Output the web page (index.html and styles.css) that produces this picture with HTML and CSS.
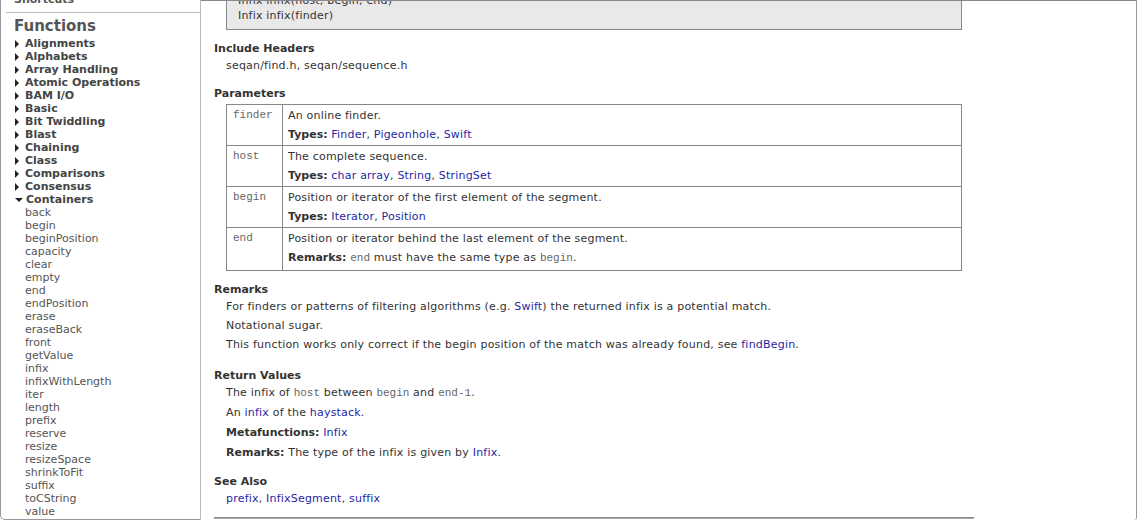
FILE: index.html
```html
<!DOCTYPE html>
<html>
<head>
<meta charset="utf-8">
<title>infix</title>
<link rel="stylesheet" href="styles.css">
</head>
<body>
<div class="window">
  <nav class="sidebar">
    <div class="shortcuts">Shortcuts</div>
    <h1 class="nav-title">Functions</h1>
    <ul class="cats">
      <li class="cat"><span class="tri"></span>Alignments</li>
      <li class="cat"><span class="tri"></span>Alphabets</li>
      <li class="cat"><span class="tri"></span>Array Handling</li>
      <li class="cat"><span class="tri"></span>Atomic Operations</li>
      <li class="cat"><span class="tri"></span>BAM I/O</li>
      <li class="cat"><span class="tri"></span>Basic</li>
      <li class="cat"><span class="tri"></span>Bit Twiddling</li>
      <li class="cat"><span class="tri"></span>Blast</li>
      <li class="cat"><span class="tri"></span>Chaining</li>
      <li class="cat"><span class="tri"></span>Class</li>
      <li class="cat"><span class="tri"></span>Comparisons</li>
      <li class="cat"><span class="tri"></span>Consensus</li>
      <li class="cat"><span class="tri open"></span>Containers
        <ul class="items">
          <li>back</li>
          <li>begin</li>
          <li>beginPosition</li>
          <li>capacity</li>
          <li>clear</li>
          <li>empty</li>
          <li>end</li>
          <li>endPosition</li>
          <li>erase</li>
          <li>eraseBack</li>
          <li>front</li>
          <li>getValue</li>
          <li>infix</li>
          <li>infixWithLength</li>
          <li>iter</li>
          <li>length</li>
          <li>prefix</li>
          <li>reserve</li>
          <li>resize</li>
          <li>resizeSpace</li>
          <li>shrinkToFit</li>
          <li>suffix</li>
          <li>toCString</li>
          <li>value</li>
        </ul>
      </li>
    </ul>
  </nav>
  <main class="main">
    <div class="content">
      <div class="signature">
        <div>Infix infix(host, begin, end)</div>
        <div>Infix infix(finder)</div>
      </div>

      <section class="sec sec-plain">
        <h2 class="sec-title">Include Headers</h2>
        <div class="sec-text">seqan/find.h, seqan/sequence.h</div>
      </section>

      <section class="sec">
        <h2 class="sec-title">Parameters</h2>
        <table class="params">
          <colgroup><col class="col-name"><col></colgroup>
          <tr>
            <td class="pname">finder</td>
            <td class="pdesc"><p>An online finder.</p><p><b>Types:</b> <a href="#">Finder</a>, <a href="#">Pigeonhole</a>, <a href="#">Swift</a></p></td>
          </tr>
          <tr>
            <td class="pname">host</td>
            <td class="pdesc"><p>The complete sequence.</p><p><b>Types:</b> <a href="#">char array</a>, <a href="#">String</a>, <a href="#">StringSet</a></p></td>
          </tr>
          <tr>
            <td class="pname">begin</td>
            <td class="pdesc"><p>Position or iterator of the first element of the segment.</p><p><b>Types:</b> <a href="#">Iterator</a>, <a href="#">Position</a></p></td>
          </tr>
          <tr class="row-last">
            <td class="pname">end</td>
            <td class="pdesc"><p>Position or iterator behind the last element of the segment.</p><p><b>Remarks:</b> <code>end</code> must have the same type as <code>begin</code>.</p></td>
          </tr>
        </table>
      </section>

      <section class="sec">
        <h2 class="sec-title">Remarks</h2>
        <p class="text">For finders or patterns of filtering algorithms (e.g. <a href="#">Swift</a>) the returned infix is a potential match.</p>
        <p class="text">Notational sugar.</p>
        <p class="text">This function works only correct if the begin position of the match was already found, see <a href="#">findBegin</a>.</p>
      </section>

      <section class="sec sec-return">
        <h2 class="sec-title">Return Values</h2>
        <p class="text">The infix of <code>host</code> between <code>begin</code> and <code>end-1</code>.</p>
        <p class="text">An <a href="#">infix</a> of the <a href="#">haystack</a>.</p>
        <p class="text"><b>Metafunctions:</b> <a href="#">Infix</a></p>
        <p class="text"><b>Remarks:</b> The type of the infix is given by <a href="#">Infix</a>.</p>
      </section>

      <section class="sec sec-last">
        <h2 class="sec-title">See Also</h2>
        <div class="sec-text"><a href="#">prefix</a>, <a href="#">InfixSegment</a>, <a href="#">suffix</a></div>
      </section>

      <div class="footer-rule"></div>
    </div>
  </main>
</div>
</body>
</html>
```
FILE: styles.css
```css
* { box-sizing: border-box; }

html, body {
  margin: 0;
  padding: 0;
  background: #fff;
}

body {
  font-family: "DejaVu Sans", Verdana, sans-serif;
  font-size: 11px;
  color: #333;
}

.window {
  display: flex;
  width: 1137px;
  height: 520px;
  overflow: hidden;
}

/* ---------- sidebar ---------- */
.sidebar {
  width: 201px;
  flex: none;
  height: 520px;
  overflow: hidden;
  border-left: 1px solid #999;
  border-right: 1px solid #bbb;
  border-bottom: 1px solid #999;
  border-bottom-left-radius: 5px;
  color: #555;
}

.shortcuts {
  margin: -7px 0 0 5px;
  padding: 0 0 6px 8px;
  line-height: 13px;
  font-weight: bold;
  border-bottom: 1px solid #bbb;
}

.nav-title {
  margin: 4px 0 2px 13px;
  font-size: 15px;
  line-height: 18px;
  font-weight: bold;
  color: #555;
}

.cats, .items {
  list-style: none;
  margin: 0;
  padding: 0;
}

.cats {
  padding-left: 13px;
}

.cat {
  font-weight: bold;
  line-height: 13px;
  color: #444;
}

.tri {
  display: inline-block;
  width: 0;
  height: 0;
  margin: 0 6px 0 1px;
  border-left: 4px solid #222;
  border-top: 4px solid transparent;
  border-bottom: 4px solid transparent;
  vertical-align: -1px;
}

.tri.open {
  margin: 0 3px 0 1px;
  border-left: 4px solid transparent;
  border-right: 4px solid transparent;
  border-top: 4px solid #222;
  border-bottom: 0;
  vertical-align: 1px;
}

.items {
  padding-left: 11px;
  font-weight: normal;
  color: #555;
}

.items li {
  line-height: 13px;
}

/* ---------- main ---------- */
.main {
  flex: 1;
  height: 520px;
  overflow: hidden;
  border-top: 1px solid #888;
  border-right: 1px solid #999;
  border-bottom-right-radius: 3px;
  padding-left: 13px;
}

.content {
  width: 760px;
  margin-top: -17px;
  letter-spacing: 0.2px;
}

.content b,
.sec-title {
  letter-spacing: 0;
}

.signature {
  margin: 0 12px 12px;
  padding: 8px 11px 6px;
  border: 1px solid #888;
  background: #e9e9e9;
  line-height: 15px;
}

.sec {
  display: flow-root;
  margin: 0 0 12px;
}

.sec-plain {
  margin-bottom: 15px;
}

.sec-last {
  margin-bottom: 0;
}

.sec-title {
  margin: 0 0 4px;
  font-size: 11px;
  line-height: 13px;
  font-weight: bold;
  color: #333;
}

.sec-text {
  padding-left: 12px;
  line-height: 13px;
}

.text {
  margin: 0 0 6px;
  padding-left: 12px;
  line-height: 13px;
}

.sec-return {
  margin-bottom: 9px;
}

.sec-return .text {
  margin-bottom: 7px;
}

a {
  color: #1f1fa3;
  text-decoration: none;
}

code {
  font-family: "Liberation Mono", "Courier New", monospace;
  font-size: 11px;
  color: #666;
  line-height: 1;
  letter-spacing: 0;
}

.params {
  width: 736px;
  margin: 1px 12px 0;
  border-collapse: collapse;
  table-layout: fixed;
  border: 1px solid #888;
}

.col-name {
  width: 56px;
}

.params td {
  border: 1px solid #888;
  vertical-align: top;
  padding: 4px 5px 4px 5px;
  line-height: 13px;
}

.params .row-last td {
  padding-bottom: 6px;
}

.params td.pname {
  padding-left: 6px;
  font-family: "Liberation Mono", "Courier New", monospace;
  font-size: 11px;
  color: #666;
  letter-spacing: 0;
}

.params p {
  margin: 0;
}

.params p + p {
  margin-top: 6px;
}

.footer-rule {
  height: 0;
  margin-top: 12px;
  border-top: 1px solid #888;
  border-bottom: 1px solid #aaa;
}
```
